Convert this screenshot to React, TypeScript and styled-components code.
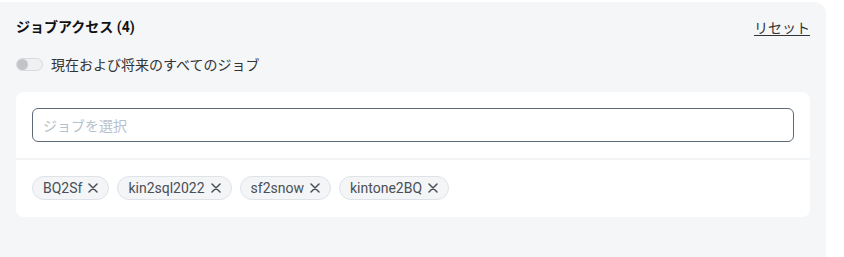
import React from 'react'
import styled, { createGlobalStyle } from 'styled-components'

const GlobalStyle = createGlobalStyle`
  body {
    margin: 0;
    background: #ffffff;
    font-family: Roboto, 'Noto Sans CJK JP', sans-serif;
    color: #212529;
  }
`

const Panel = styled.section`
  width: 826px;
  margin-top: 2px;
  min-height: 262px;
  box-sizing: border-box;
  padding: 14px 16px 16px 16px;
  background: #f5f6f8;
  border-radius: 0 12px 0 0;
`

const Header = styled.div`
  display: flex;
  justify-content: space-between;
  align-items: center;
  height: 22px;
`

const Title = styled.h2`
  margin: 0;
  font-family: Roboto, 'Noto Sans CJK JP', sans-serif;
  font-size: 14px;
  font-weight: 700;
  line-height: 22px;
  color: #111;
`

const ResetLink = styled.a`
  font-family: 'Noto Sans CJK JP', sans-serif;
  font-size: 14px;
  line-height: 20px;
  color: #333;
  text-decoration: underline;
  text-underline-offset: 2px;
  cursor: pointer;
`

const ToggleRow = styled.label`
  display: flex;
  align-items: center;
  gap: 8px;
  height: 20px;
  margin-top: 16px;
  font-family: 'Noto Sans CJK JP', sans-serif;
  font-size: 14px;
  color: #333;
`

const Track = styled.span<{ on: boolean }>`
  position: relative;
  display: inline-block;
  width: 27px;
  height: 13px;
  box-sizing: border-box;
  border-radius: 7px;
  border: 1px solid #d6d9dd;
  background: ${({ on }) => (on ? '#4a90e2' : '#eef0f2')};
`

const Knob = styled.span<{ on: boolean }>`
  position: absolute;
  top: 0px;
  left: ${({ on }) => (on ? '15px' : '0px')};
  width: 11px;
  height: 11px;
  border-radius: 50%;
  background: #c2c4c7;
`

const Card = styled.div`
  margin-top: 18px;
  background: #ffffff;
  border-radius: 8px;
`

const InputSection = styled.div`
  padding: 16px 16px 16px 16px;
  border-bottom: 2px solid #f2f4f6;
`

const Input = styled.input`
  display: block;
  width: 100%;
  height: 34px;
  box-sizing: border-box;
  padding: 0 10px;
  border: 1px solid #5c6a78;
  border-radius: 6px;
  font-family: 'Noto Sans CJK JP', sans-serif;
  font-size: 14px;
  color: #333;
  outline: none;

  &::placeholder {
    color: #b5c1cc;
  }
`

const ChipList = styled.div`
  display: flex;
  gap: 8px;
  padding: 16px 16px 17px 16px;
`

const Chip = styled.span`
  display: inline-flex;
  align-items: center;
  gap: 6px;
  height: 24px;
  box-sizing: border-box;
  padding: 0 10px 0 10px;
  border: 1px solid #dfe3e8;
  border-radius: 12px;
  background: #f3f5f7;
  font-family: Roboto, sans-serif;
  font-size: 14px;
  color: #4a4f55;
`

const RemoveButton = styled.button`
  display: inline-flex;
  align-items: center;
  justify-content: center;
  padding: 0;
  border: none;
  background: none;
  color: #4a4f55;
  cursor: pointer;
`

const jobs = ['BQ2Sf', 'kin2sql2022', 'sf2snow', 'kintone2BQ']

const CloseIcon: React.FC = () => (
  <svg width="10" height="10" viewBox="0 0 10 10">
    <path d="M1 1 L9 9 M9 1 L1 9" stroke="currentColor" strokeWidth="1.5" strokeLinecap="round" />
  </svg>
)

const App: React.FC = () => {
  return (
    <>
      <GlobalStyle />
      <Panel>
        <Header>
          <Title>ジョブアクセス ({jobs.length})</Title>
          <ResetLink>リセット</ResetLink>
        </Header>
        <ToggleRow>
          <Track on={false}>
            <Knob on={false} />
          </Track>
          現在および将来のすべてのジョブ
        </ToggleRow>
        <Card>
          <InputSection>
            <Input placeholder="ジョブを選択" />
          </InputSection>
          <ChipList>
            {jobs.map((job) => (
              <Chip key={job}>
                {job}
                <RemoveButton aria-label={`${job}を削除`}>
                  <CloseIcon />
                </RemoveButton>
              </Chip>
            ))}
          </ChipList>
        </Card>
      </Panel>
    </>
  )
}

export default App
